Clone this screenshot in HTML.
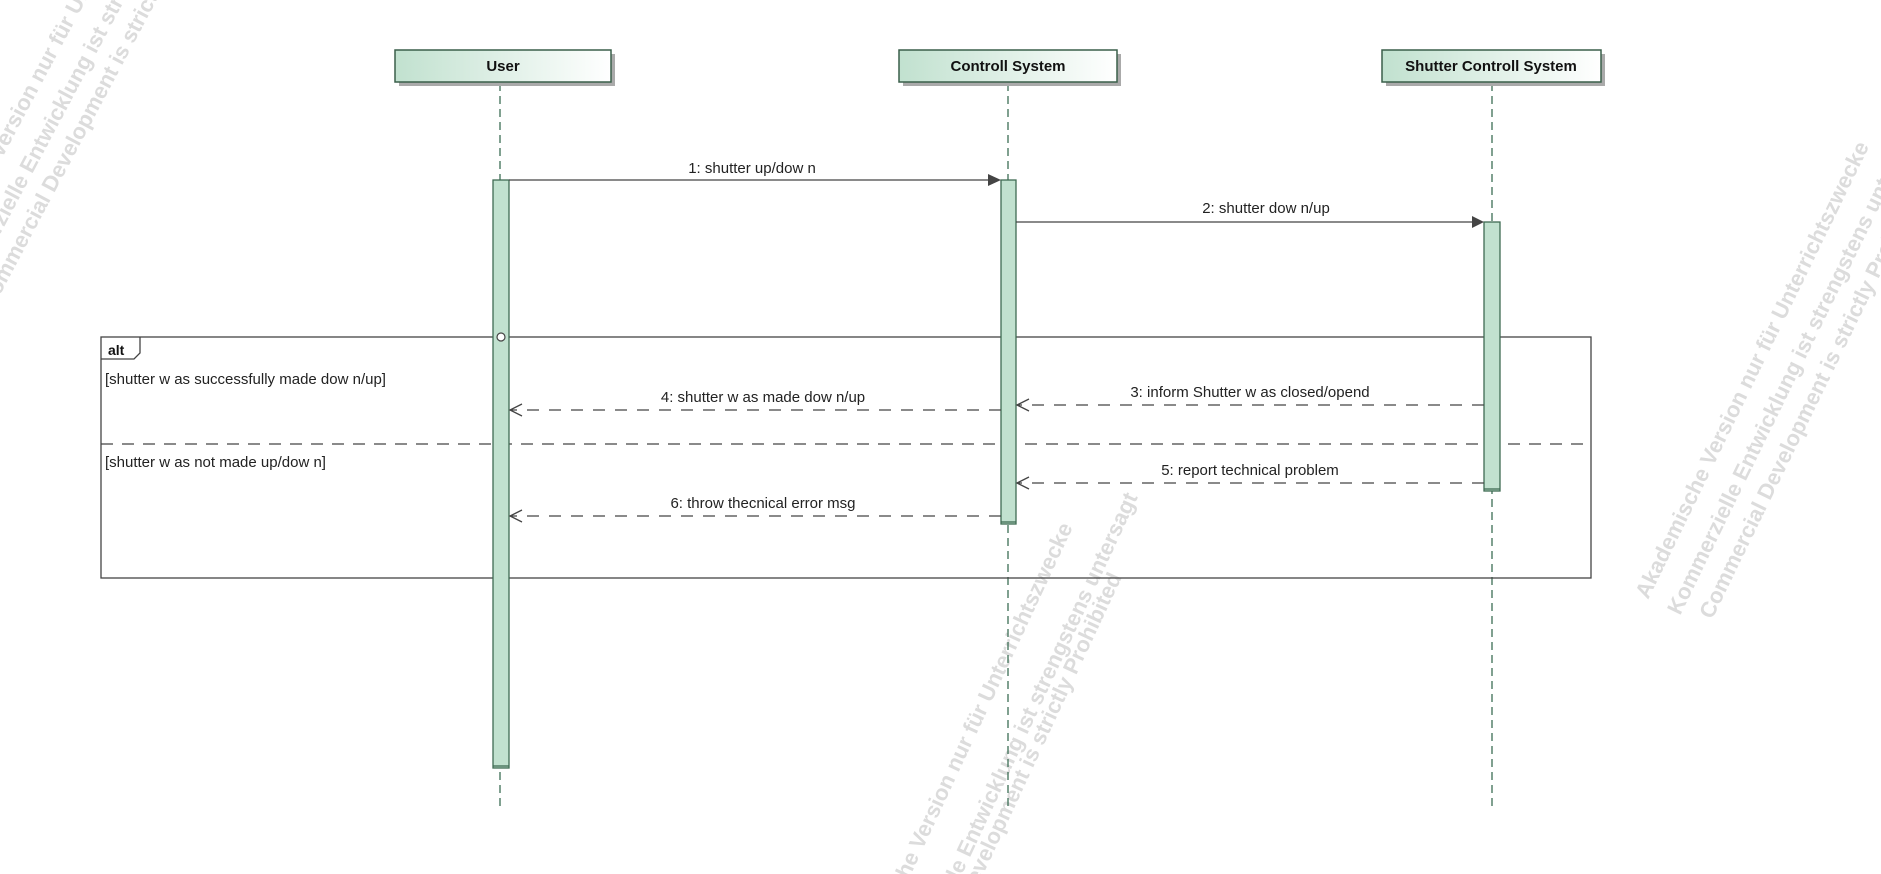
<!DOCTYPE html>
<html><head><meta charset="utf-8"><style>
html,body{margin:0;padding:0;background:#fff;width:1881px;height:874px;overflow:hidden;}
svg{display:block;}
.m{font-family:"Liberation Sans",Arial,sans-serif;font-size:15px;fill:#222;}
.h{font-family:"Liberation Sans",Arial,sans-serif;font-size:15px;font-weight:bold;fill:#111;}
.w{font-family:"Liberation Sans",Arial,sans-serif;font-size:22px;font-weight:bold;fill:#dcdcdc;}
</style></head><body>
<svg width="1881" height="874" viewBox="0 0 1881 874" xmlns="http://www.w3.org/2000/svg">
<defs>
<linearGradient id="g" x1="0" y1="0" x2="1" y2="0">
<stop offset="0" stop-color="#c1e1cf"/><stop offset="1" stop-color="#ffffff"/>
</linearGradient>
</defs>
<g class="w">
<text transform="translate(-68,290) rotate(-62)">Akademische Version nur für Unterrichtszwecke</text>
<text transform="translate(-38,306) rotate(-62)">Kommerzielle Entwicklung ist strengstens untersagt</text>
<text transform="translate(-8,310) rotate(-62)">Commercial Development is strictly Prohibited</text>
<text text-anchor="end" transform="translate(1073,527) rotate(-65)">Akademische Version nur für Unterrichtszwecke</text>
<text text-anchor="end" transform="translate(1138,497) rotate(-65)">Kommerzielle Entwicklung ist strengstens untersagt</text>
<text text-anchor="end" transform="translate(1122,577) rotate(-65)">Commercial Development is strictly Prohibited</text>
<text transform="translate(1648,600) rotate(-64)">Akademische Version nur für Unterrichtszwecke</text>
<text transform="translate(1680,616) rotate(-64)">Kommerzielle Entwicklung ist strengstens untersagt</text>
<text transform="translate(1712,620) rotate(-64)">Commercial Development is strictly Prohibited</text>
</g>
<g stroke="#3c6e55" stroke-width="1.3" stroke-dasharray="8,5">
<line x1="500" y1="83" x2="500" y2="806"/>
<line x1="1008" y1="83" x2="1008" y2="806"/>
<line x1="1492" y1="83" x2="1492" y2="806"/>
</g>
<g stroke="#3a5f4a" stroke-width="1.5">
<rect x="399" y="54" width="216" height="32" fill="#aaa" stroke="none"/>
<rect x="395" y="50" width="216" height="32" fill="url(#g)"/>
<rect x="903" y="54" width="218" height="32" fill="#aaa" stroke="none"/>
<rect x="899" y="50" width="218" height="32" fill="url(#g)"/>
<rect x="1386" y="54" width="219" height="32" fill="#aaa" stroke="none"/>
<rect x="1382" y="50" width="219" height="32" fill="url(#g)"/>
</g>
<text class="h" x="503" y="71" text-anchor="middle">User</text>
<text class="h" x="1008" y="71" text-anchor="middle">Controll System</text>
<text class="h" x="1491" y="71" text-anchor="middle">Shutter Controll System</text>
<rect x="101" y="337" width="1490" height="241" fill="none" stroke="#444" stroke-width="1.3"/>
<path d="M101 359 H134 L140 353 V337" fill="none" stroke="#444" stroke-width="1.3"/>
<text class="h" x="108" y="355" style="font-size:14px">alt</text>
<line x1="101" y1="444" x2="1591" y2="444" stroke="#444" stroke-width="1.3" stroke-dasharray="12,9"/>
<text class="m" x="105" y="384">[shutter w as successfully made dow n/up]</text>
<text class="m" x="105" y="467">[shutter w as not made up/dow n]</text>
<g fill="#c1e1cf" stroke="#3f6b53" stroke-width="1.3">
<rect x="493" y="180" width="16" height="588"/>
<line x1="493" y1="766" x2="509" y2="766"/>
<rect x="1001" y="180" width="15" height="344"/>
<line x1="1001" y1="522" x2="1016" y2="522"/>
<rect x="1484" y="222" width="16" height="269"/>
<line x1="1484" y1="489" x2="1500" y2="489"/>
</g>
<circle cx="501" cy="337" r="4" fill="#fff" stroke="#444" stroke-width="1.2"/>
<g stroke="#444" stroke-width="1.3" fill="none">
<line x1="509" y1="180" x2="990" y2="180"/>
<line x1="1016" y1="222" x2="1474" y2="222"/>
<line x1="1484" y1="405" x2="1017" y2="405" stroke-dasharray="12,10"/>
<line x1="1001" y1="410" x2="510" y2="410" stroke-dasharray="12,10"/>
<line x1="1484" y1="483" x2="1017" y2="483" stroke-dasharray="12,10"/>
<line x1="1001" y1="516" x2="510" y2="516" stroke-dasharray="12,10"/>
<path d="M1029 399 L1017 405 L1029 411"/>
<path d="M522 404 L510 410 L522 416"/>
<path d="M1029 477 L1017 483 L1029 489"/>
<path d="M522 510 L510 516 L522 522"/>
</g>
<path d="M988 174 L1001 180 L988 186 Z" fill="#444"/>
<path d="M1472 216 L1484 222 L1472 228 Z" fill="#444"/>
<text class="m" x="752" y="173" text-anchor="middle">1: shutter up/dow n</text>
<text class="m" x="1266" y="213" text-anchor="middle">2: shutter dow n/up</text>
<text class="m" x="1250" y="397" text-anchor="middle">3: inform Shutter w as closed/opend</text>
<text class="m" x="763" y="402" text-anchor="middle">4: shutter w as made dow n/up</text>
<text class="m" x="1250" y="475" text-anchor="middle">5: report technical problem</text>
<text class="m" x="763" y="508" text-anchor="middle">6: throw  thecnical error msg</text>
</svg>
</body></html>
